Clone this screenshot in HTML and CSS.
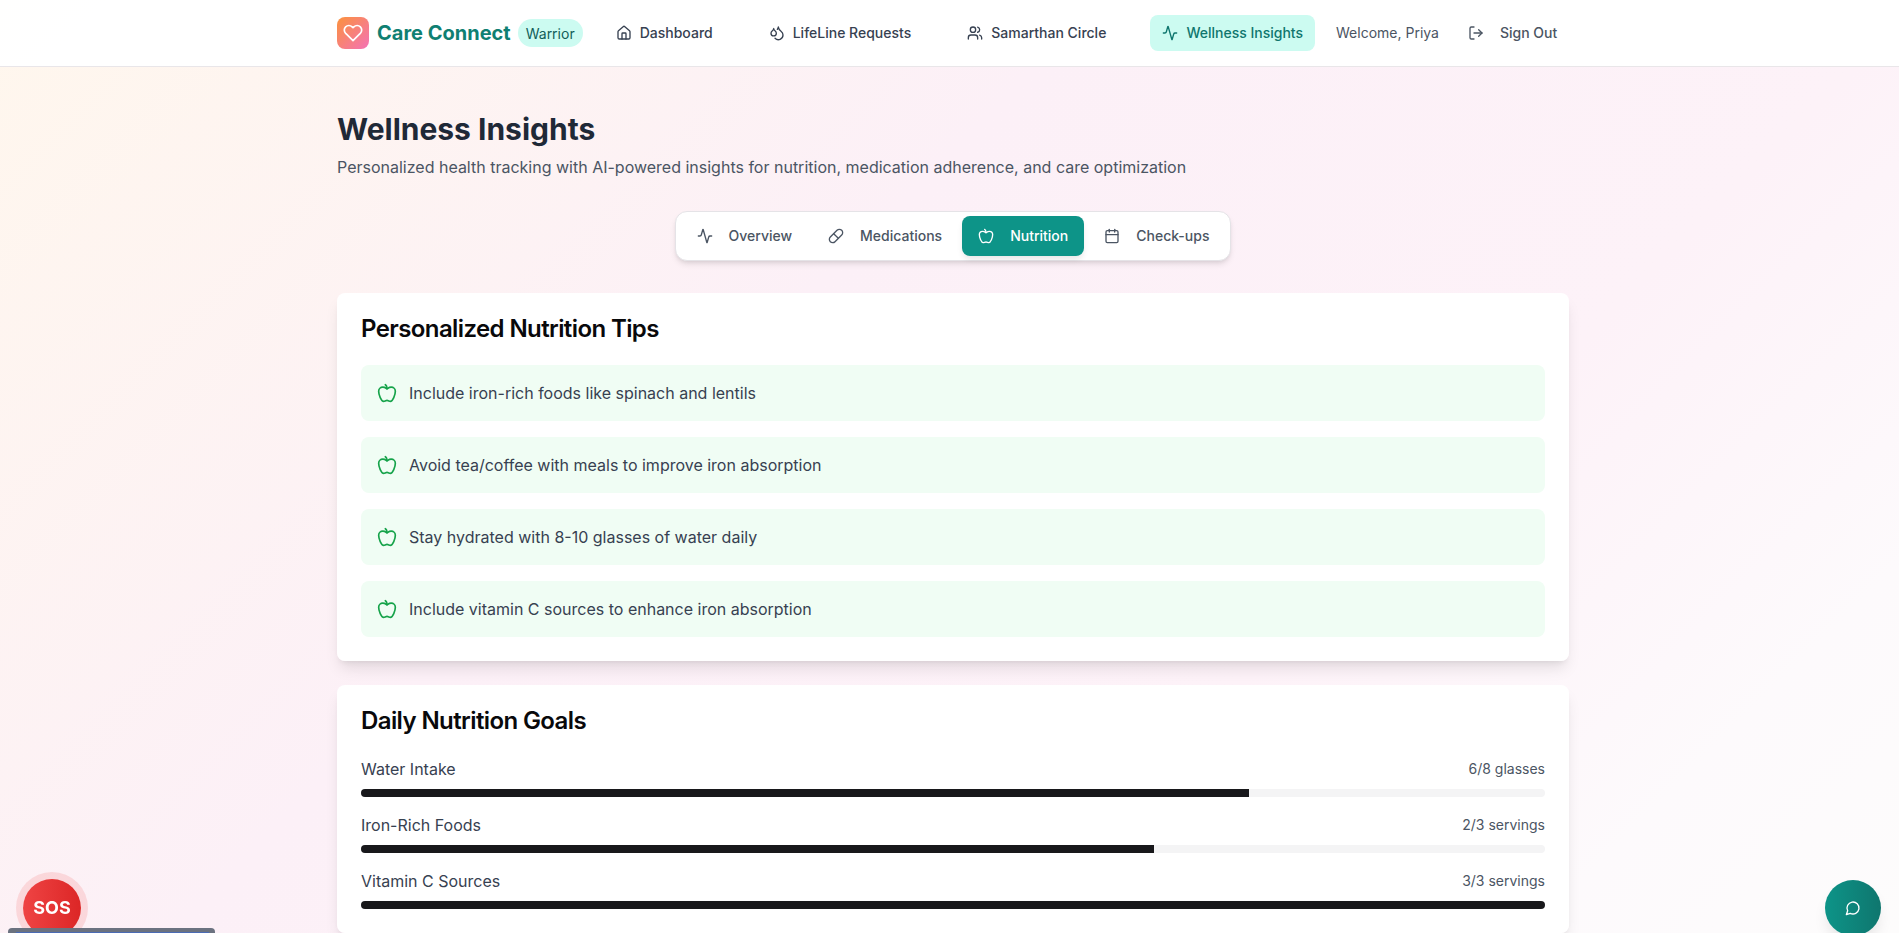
FILE: index.html
```html
<!DOCTYPE html>
<html lang="en">
<head>
    <meta charset="UTF-8">
    <meta name="viewport" content="width=device-width, initial-scale=1.0">
    <title>Care Connect - Wellness Insights</title>
    <link rel="stylesheet" href="styles.css">
</head>
<body>
    <svg class="sprite" xmlns="http://www.w3.org/2000/svg">
        <symbol id="i-heart" viewBox="0 0 24 24"><path d="M20.84 4.61a5.5 5.5 0 0 0-7.78 0L12 5.67l-1.06-1.06a5.5 5.5 0 0 0-7.78 7.78l1.06 1.06L12 21.23l7.78-7.78 1.06-1.06a5.5 5.5 0 0 0 0-7.78z"/></symbol>
        <symbol id="i-house" viewBox="0 0 24 24"><path d="M15 21v-8a1 1 0 0 0-1-1h-4a1 1 0 0 0-1 1v8"/><path d="M3 10a2 2 0 0 1 .709-1.528l7-5.999a2 2 0 0 1 2.582 0l7 5.999A2 2 0 0 1 21 10v9a2 2 0 0 1-2 2H5a2 2 0 0 1-2-2z"/></symbol>
        <symbol id="i-droplets" viewBox="0 0 24 24"><path d="M7 16.3c2.2 0 4-1.83 4-4.05 0-1.16-.57-2.26-1.71-3.19S7.29 6.75 7 5.3c-.29 1.45-1.14 2.84-2.29 3.76S3 11.1 3 12.25c0 2.22 1.8 4.05 4 4.05z"/><path d="M12.56 6.6A10.97 10.97 0 0 0 14 3.02c.5 2.5 2 4.9 4 6.5s3 3.5 3 5.5a6.98 6.98 0 0 1-11.91 4.97"/></symbol>
        <symbol id="i-users" viewBox="0 0 24 24"><path d="M16 21v-2a4 4 0 0 0-4-4H6a4 4 0 0 0-4 4v2"/><circle cx="9" cy="7" r="4"/><path d="M22 21v-2a4 4 0 0 0-3-3.87"/><path d="M16 3.13a4 4 0 0 1 0 7.75"/></symbol>
        <symbol id="i-activity" viewBox="0 0 24 24"><path d="M22 12h-2.48a2 2 0 0 0-1.93 1.46l-2.35 8.36a.25.25 0 0 1-.48 0L9.24 2.18a.25.25 0 0 0-.48 0l-2.35 8.36A2 2 0 0 1 4.49 12H2"/></symbol>
        <symbol id="i-logout" viewBox="0 0 24 24"><path d="M9 21H5a2 2 0 0 1-2-2V5a2 2 0 0 1 2-2h4"/><polyline points="16 17 21 12 16 7"/><line x1="21" y1="12" x2="9" y2="12"/></symbol>
        <symbol id="i-pill" viewBox="0 0 24 24"><path d="m10.5 20.5 10-10a4.95 4.95 0 1 0-7-7l-10 10a4.95 4.95 0 1 0 7 7Z"/><path d="m8.5 8.5 7 7"/></symbol>
        <symbol id="i-apple" viewBox="0 0 24 24"><path d="M12 20.94c1.5 0 2.75 1.06 4 1.06 3 0 6-8 6-12.22A4.91 4.91 0 0 0 17 5c-2.22 0-4 1.44-5 2-1-.56-2.78-2-5-2a4.9 4.9 0 0 0-5 4.78C2 14 5 22 8 22c1.25 0 2.5-1.06 4-1.06Z"/><path d="M10 2c1 .5 2 2 2 5"/></symbol>
        <symbol id="i-calendar" viewBox="0 0 24 24"><path d="M8 2v4"/><path d="M16 2v4"/><rect x="3" y="4" width="18" height="18" rx="2"/><path d="M3 10h18"/></symbol>
        <symbol id="i-message" viewBox="0 0 24 24"><path d="M7.9 20A9 9 0 1 0 4 16.1L2 22Z"/></symbol>
    </svg>

    <header class="topbar">
        <div class="topbar-inner">
            <div class="brand">
                <span class="brand-logo"><svg class="icon icon-logo"><use href="#i-heart"/></svg></span>
                <span class="brand-name">Care Connect</span>
                <span class="role-badge">Warrior</span>
            </div>
            <nav class="main-nav">
                <a class="nav-link"><svg class="icon"><use href="#i-house"/></svg>Dashboard</a>
                <a class="nav-link"><svg class="icon"><use href="#i-droplets"/></svg>LifeLine Requests</a>
                <a class="nav-link"><svg class="icon"><use href="#i-users"/></svg>Samarthan Circle</a>
                <a class="nav-link active"><svg class="icon"><use href="#i-activity"/></svg>Wellness Insights</a>
            </nav>
            <span class="welcome">Welcome, Priya</span>
            <a class="sign-out"><svg class="icon"><use href="#i-logout"/></svg>Sign Out</a>
        </div>
    </header>

    <main class="content">
        <h1>Wellness Insights</h1>
        <p class="subtitle">Personalized health tracking with AI-powered insights for nutrition, medication adherence, and care optimization</p>

        <div class="tabs-row">
            <div class="tabs">
                <button class="tab"><svg class="icon"><use href="#i-activity"/></svg>Overview</button>
                <button class="tab"><svg class="icon"><use href="#i-pill"/></svg>Medications</button>
                <button class="tab active"><svg class="icon"><use href="#i-apple"/></svg>Nutrition</button>
                <button class="tab"><svg class="icon"><use href="#i-calendar"/></svg>Check-ups</button>
            </div>
        </div>

        <section class="card">
            <h2>Personalized Nutrition Tips</h2>
            <div class="tip-list">
                <div class="tip"><svg class="icon icon-tip"><use href="#i-apple"/></svg>Include iron-rich foods like spinach and lentils</div>
                <div class="tip"><svg class="icon icon-tip"><use href="#i-apple"/></svg>Avoid tea/coffee with meals to improve iron absorption</div>
                <div class="tip"><svg class="icon icon-tip"><use href="#i-apple"/></svg>Stay hydrated with 8-10 glasses of water daily</div>
                <div class="tip"><svg class="icon icon-tip"><use href="#i-apple"/></svg>Include vitamin C sources to enhance iron absorption</div>
            </div>
        </section>

        <section class="card">
            <h2>Daily Nutrition Goals</h2>
            <div class="goal">
                <div class="goal-head"><span>Water Intake</span><span class="goal-value">6/8 glasses</span></div>
                <div class="progress"><div class="progress-fill" style="width: 75%"></div></div>
            </div>
            <div class="goal">
                <div class="goal-head"><span>Iron-Rich Foods</span><span class="goal-value">2/3 servings</span></div>
                <div class="progress"><div class="progress-fill" style="width: 67%"></div></div>
            </div>
            <div class="goal">
                <div class="goal-head"><span>Vitamin C Sources</span><span class="goal-value">3/3 servings</span></div>
                <div class="progress"><div class="progress-fill" style="width: 100%"></div></div>
            </div>
        </section>
    </main>

    <button class="sos">SOS</button>
    <div class="bottom-strip"><div class="bottom-strip-inner"></div></div>
    <button class="chat"><svg class="icon"><use href="#i-message"/></svg></button>
</body>
</html>
```

FILE: styles.css
```css
* {
    box-sizing: border-box;
}
html, body {
    margin: 0;
    height: 100%;
}
body {
    font-family: Inter, "Liberation Sans", sans-serif;
    color: #374151;
    overflow: hidden;
    background: linear-gradient(135deg, #fff7ed 0%, #fcf0f7 39%, #fdf2f8 68%, #fdfafc 87%, #fdfcfc 100%);
}
.sprite {
    position: absolute;
    width: 0;
    height: 0;
}
.icon {
    width: 16px;
    height: 16px;
    flex-shrink: 0;
    fill: none;
    stroke: currentColor;
    stroke-width: 2;
    stroke-linecap: round;
    stroke-linejoin: round;
}

/* top bar */
.topbar {
    height: 67px;
    background: rgba(255, 255, 255, 0.95);
    border-bottom: 1px solid #e9e6e9;
}
.topbar-inner {
    width: 1232px;
    height: 66px;
    margin-left: 337px;
    display: flex;
    align-items: center;
    font-size: 14px;
    font-weight: 500;
    white-space: nowrap;
}
.brand {
    display: flex;
    align-items: center;
}
.brand-logo {
    width: 32px;
    height: 32px;
    margin-right: 8px;
    border-radius: 8px;
    display: flex;
    align-items: center;
    justify-content: center;
    color: #fff;
    background: linear-gradient(135deg, #fb923c, #f472b6);
}
.icon-logo {
    width: 20px;
    height: 20px;
}
.brand-name {
    font-size: 20px;
    font-weight: 700;
    color: #0f7f72;
}
.role-badge {
    height: 28px;
    margin-left: 7px;
    padding: 0 8px;
    border-radius: 14px;
    display: flex;
    align-items: center;
    font-weight: 400;
    color: #115e59;
    background: #ccfbf1;
}
.main-nav {
    display: flex;
    gap: 32px;
    margin-left: 21px;
}
.nav-link {
    height: 36px;
    padding: 0 12px 1px;
    border-radius: 8px;
    display: flex;
    align-items: center;
    gap: 8px;
    color: #374151;
}
.nav-link.active {
    color: #0f766e;
    background: #ccfbf1;
}
.welcome {
    margin-left: 21px;
    padding-bottom: 1px;
    font-weight: 400;
    color: #4b5563;
}
.sign-out {
    height: 36px;
    margin-left: 17px;
    padding: 0 12px 1px;
    display: flex;
    align-items: center;
    gap: 16px;
    color: #4b5563;
}

/* page content */
.content {
    width: 1232px;
    margin-left: 337px;
    padding-top: 44px;
}
h1 {
    margin: 0 0 8px;
    font-size: 30px;
    line-height: 36px;
    font-weight: 700;
    color: #1f2937;
}
.subtitle {
    margin: 0;
    font-size: 16px;
    line-height: 24px;
    color: #4b5563;
}
.tabs-row {
    display: flex;
    justify-content: center;
    margin: 32px 0;
}
.tabs {
    display: flex;
    gap: 4px;
    padding: 4px 5px;
    background: #fff;
    border: 1px solid #e5e3e7;
    border-radius: 12px;
    box-shadow: 0 4px 6px -1px rgba(0, 0, 0, 0.1), 0 2px 4px -2px rgba(0, 0, 0, 0.1);
}
.tab {
    height: 40px;
    padding: 0 16px 1px;
    border: none;
    border-radius: 8px;
    display: flex;
    align-items: center;
    gap: 16px;
    font-family: inherit;
    font-size: 14px;
    font-weight: 500;
    color: #4b5563;
    background: none;
}
.tab.active {
    color: #fff;
    background: #0d9488;
    box-shadow: 0 4px 6px -1px rgba(0, 0, 0, 0.1);
}
.card {
    margin-bottom: 24px;
    padding: 24px;
    border-radius: 8px;
    background: rgba(255, 255, 255, 0.95);
    box-shadow: 0 10px 15px -3px rgba(0, 0, 0, 0.1), 0 4px 6px -4px rgba(0, 0, 0, 0.1);
}
h2 {
    margin: 0 0 24px;
    font-size: 24px;
    line-height: 24px;
    font-weight: 600;
    letter-spacing: -0.6px;
    color: #09090b;
}
.tip-list {
    display: flex;
    flex-direction: column;
    gap: 16px;
}
.tip {
    height: 56px;
    padding: 0 16px;
    border-radius: 8px;
    display: flex;
    align-items: center;
    gap: 12px;
    font-size: 16px;
    background: #f0fdf4;
}
.icon-tip {
    width: 20px;
    height: 20px;
    color: #16a34a;
}
.goal {
    margin-bottom: 16px;
}
.goal:last-child {
    margin-bottom: 0;
}
.goal-head {
    display: flex;
    justify-content: space-between;
    align-items: center;
    margin-bottom: 8px;
    font-size: 16px;
    line-height: 24px;
}
.goal-value {
    font-size: 14px;
    color: #4b5563;
}
.progress {
    height: 8px;
    border-radius: 4px;
    overflow: hidden;
    background: #f4f4f5;
}
.progress-fill {
    height: 100%;
    background: #18181b;
}

/* floating stuff */
.sos {
    position: fixed;
    left: 23px;
    top: 879px;
    width: 58px;
    height: 58px;
    padding: 0 0 2px;
    border: none;
    border-radius: 50%;
    font-family: inherit;
    font-size: 18px;
    font-weight: 700;
    color: #fff;
    background: linear-gradient(90deg, #ef4444, #dc2626);
    box-shadow: 0 0 0 7px rgba(239, 68, 68, 0.15);
}
.bottom-strip {
    position: fixed;
    left: 8px;
    top: 928px;
    width: 207px;
    height: 20px;
    padding: 4px 6px 0 8px;
    border-radius: 4px;
    background: #6b7280;
}
.bottom-strip-inner {
    height: 10px;
    background: #4a6bb5;
}
.chat {
    position: fixed;
    left: 1825px;
    top: 880px;
    width: 56px;
    height: 56px;
    border: none;
    border-radius: 50%;
    display: flex;
    align-items: center;
    justify-content: center;
    color: #fff;
    background: linear-gradient(90deg, #0d9488, #0f766e);
    box-shadow: 0 10px 15px -3px rgba(0, 0, 0, 0.1);
}
```
